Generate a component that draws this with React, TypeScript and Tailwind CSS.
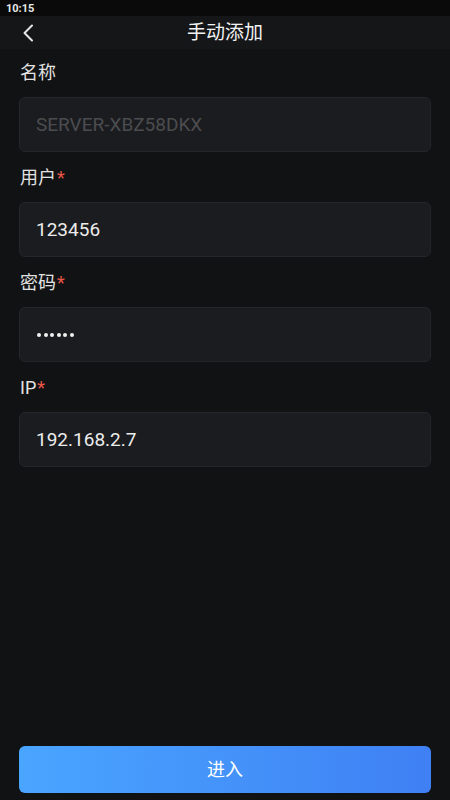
import React from "react";

type Field = {
  label: string;
  value: string;
  required?: boolean;
  muted?: boolean;
  password?: boolean;
};

const fields: Field[] = [
  { label: "名称", value: "SERVER-XBZ58DKX", muted: true },
  { label: "用户", value: "123456", required: true },
  { label: "密码", value: "123456", required: true, password: true },
  { label: "IP", value: "192.168.2.7", required: true },
];

const font = { fontFamily: 'Roboto, "Noto Sans CJK SC", sans-serif' };

export default function App() {
  return (
    <div className="flex h-[800px] w-[450px] flex-col bg-[#111214] text-white" style={font}>
      {/* status bar */}
      <div className="flex h-4 items-center bg-[#0a0a0b] px-[6px] text-[11px] font-bold leading-none text-[#e8e8e8]">
        10:15
      </div>

      {/* header */}
      <div className="relative flex h-[33px] items-center justify-center bg-[#151618]">
        <button type="button" className="absolute left-[20px] top-[7px] text-[#e6e6e6]">
          <svg width="16" height="20" viewBox="0 0 16 20" fill="none">
            <path d="M12 2.5 L4.5 10 L12 17.5" stroke="currentColor" strokeWidth="2" strokeLinecap="round" strokeLinejoin="round" />
          </svg>
        </button>
        <h1 className="text-[19px] leading-none text-[#f2f2f2]">手动添加</h1>
      </div>

      {/* form */}
      <div className="flex flex-col px-[19px] pt-[11px]">
        {fields.map((f) => (
          <div key={f.label} className="flex flex-col">
            <div className="flex h-[25px] items-center pl-px text-[18px] leading-none text-[#e2e2e2]">
              {f.label}
              {f.required ? <span className="ml-px text-[#e8574a]">*</span> : null}
            </div>
            <div className="mt-[12px] mb-[13px] flex h-[55px] items-center rounded-[6px] border border-[#25262a] bg-[#1b1c1f] px-4">
              {f.password ? (
                <div className="flex gap-[2.5px] pl-px">
                  {Array.from({ length: 6 }).map((_, i) => (
                    <span key={i} className="h-[4px] w-[4px] rounded-full bg-[#f0f0f0]" />
                  ))}
                </div>
              ) : (
                <span className={`text-[19px] leading-none ${f.muted ? "text-[#4b4c4f]" : "text-[#ececec]"}`}>
                  {f.value}
                </span>
              )}
            </div>
          </div>
        ))}
      </div>

      <div className="flex-1" />

      <div className="px-[19px] pb-[7px]">
        <button
          type="button"
          className="flex h-[47px] w-full items-center justify-center rounded-[6px] bg-gradient-to-r from-[#4aa5ff] to-[#3f80f4] text-[18px] text-white"
        >
          进入
        </button>
      </div>
    </div>
  );
}
